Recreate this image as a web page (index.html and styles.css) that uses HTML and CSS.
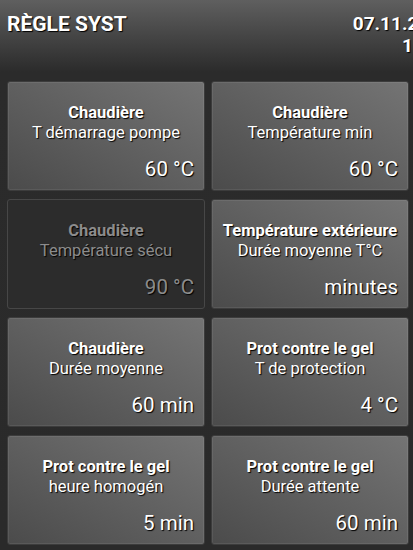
FILE: index.html
```html
<!DOCTYPE html>
<html>
<head>
  <meta charset="utf-8">
  <title>Règle syst</title>
  <link rel="stylesheet" href="styles.css">
</head>
<body>
<div class="screen">
  <div class="header">
    <div class="title">RÈGLE SYST</div>
    <div class="clock">
      <div>07.11.2024</div>
      <div>19:45</div>
    </div>
  </div>
  <div class="grid">
    <div class="tile">
      <div class="tile-name">Chaudière</div>
      <div class="tile-sub">T démarrage pompe</div>
      <div class="tile-value">60 °C</div>
    </div>
    <div class="tile">
      <div class="tile-name">Chaudière</div>
      <div class="tile-sub">Température min</div>
      <div class="tile-value">60 °C</div>
    </div>
    <div class="tile off">
      <div class="tile-name">Chaudière</div>
      <div class="tile-sub">Température sécu</div>
      <div class="tile-value">90 °C</div>
    </div>
    <div class="tile">
      <div class="tile-name">Température extérieure</div>
      <div class="tile-sub">Durée moyenne T°C</div>
      <div class="tile-value">minutes</div>
    </div>
    <div class="tile">
      <div class="tile-name">Chaudière</div>
      <div class="tile-sub">Durée moyenne</div>
      <div class="tile-value">60 min</div>
    </div>
    <div class="tile">
      <div class="tile-name">Prot contre le gel</div>
      <div class="tile-sub">T de protection</div>
      <div class="tile-value">4 °C</div>
    </div>
    <div class="tile">
      <div class="tile-name">Prot contre le gel</div>
      <div class="tile-sub">heure homogén</div>
      <div class="tile-value">5 min</div>
    </div>
    <div class="tile">
      <div class="tile-name">Prot contre le gel</div>
      <div class="tile-sub">Durée attente</div>
      <div class="tile-value">60 min</div>
    </div>
  </div>
</div>
</body>
</html>
```

FILE: styles.css
```css
html, body {
  margin: 0;
  height: 100%;
  overflow: hidden;
  background: #2a2a2a;
}
.screen {
  width: 413px;
  height: 550px;
  font-family: Roboto, "Liberation Sans", sans-serif;
  color: #fff;
  text-shadow: 1px 1px 1px #000;
  background: linear-gradient(to bottom, #5f5f5f 0, #2b2b2b 72px, #2a2a2a 100%);
}
.header {
  display: flex;
  justify-content: space-between;
  width: 451px;
  height: 81px;
  padding: 0 0 0 7px;
  box-sizing: border-box;
  font-weight: bold;
  font-size: 21px;
  line-height: 22px;
}
.title {
  padding-top: 13px;
}
.clock {
  padding-top: 13px;
  font-size: 19px;
  text-align: right;
}
.grid {
  display: grid;
  grid-template-columns: 198px 198px;
  grid-auto-rows: 110px;
  column-gap: 6px;
  row-gap: 8px;
  padding-left: 7px;
}
.tile {
  display: flex;
  flex-direction: column;
  box-sizing: border-box;
  padding: 21px 10px 9px;
  border: 1px solid #3c3c3c;
  border-radius: 3px;
  background: linear-gradient(to bottom left, #747474, #4b4b4b);
  box-shadow: inset 0 0 0 1px rgba(255, 255, 255, 0.07);
  text-align: center;
}
.tile-name {
  font-weight: bold;
  font-size: 16.5px;
  line-height: 20px;
  white-space: nowrap;
}
.tile-sub {
  font-size: 16.5px;
  line-height: 20px;
  white-space: nowrap;
}
.tile-value {
  margin-top: auto;
  text-align: right;
  font-size: 20.5px;
  line-height: 24px;
}
.off {
  background: #2c2c2c;
  border-color: #474747;
  box-shadow: none;
  color: #8c8c8c;
}
```
